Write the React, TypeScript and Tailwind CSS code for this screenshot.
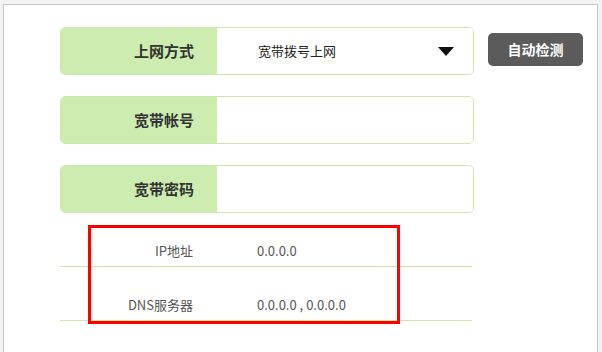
const font = { fontFamily: '"Noto Sans CJK SC", "Liberation Sans", sans-serif' };

interface FieldRowProps {
  label: string;
  value?: string;
  dropdown?: boolean;
}

function FieldRow({ label, value, dropdown }: FieldRowProps) {
  return (
    <div className="flex h-[48px] w-[414px] overflow-hidden rounded-[5px] border border-[#d1e5a9]">
      <div className="flex w-[156px] items-center justify-end bg-[#cdedb0] pr-[23px] text-[15px] font-bold text-[#333]">
        {label}
      </div>
      <div className="flex flex-1 items-center justify-between bg-white pl-[41px] pr-[19px] text-[13px] text-[#222]">
        <span>{value}</span>
        {dropdown && (
          <svg width="16" height="9" viewBox="0 0 16 9">
            <path d="M0 0 H16 L8 9 Z" fill="#111" />
          </svg>
        )}
      </div>
    </div>
  );
}

function InfoRow({ label, value }: { label: string; value: string }) {
  return (
    <div className="flex h-[54px] w-[412px] items-end border-b border-[#d0e5a8] pb-[6px] text-[13px] text-[#555]">
      <div className="w-[157px] pr-[24px] text-right">{label}</div>
      <div className="pl-[40px]">{value}</div>
    </div>
  );
}

export default function App() {
  return (
    <div className="h-[352px] w-[602px] overflow-hidden bg-[#f3f3f3] pl-[3px] pr-[4px] pt-[4px]" style={font}>
      <div className="relative h-full border-l border-r border-t border-[#c9c9c9] bg-white pl-[56px] pt-[22px]">
        <div className="flex flex-col gap-[21px]">
          <div className="flex items-start gap-[14px]">
            <FieldRow label="上网方式" value="宽带拨号上网" dropdown />
            <button
              type="button"
              className="mt-[6px] h-[33px] w-[95px] rounded-[5px] bg-[#5b5b5b] text-[14px] font-bold text-white"
            >
              自动检测
            </button>
          </div>
          <FieldRow label="宽带帐号" />
          <FieldRow label="宽带密码" />
        </div>
        <InfoRow label="IP地址" value="0.0.0.0" />
        <InfoRow label="DNS服务器" value="0.0.0.0 , 0.0.0.0" />
        <div className="absolute left-[84px] top-[220px] h-[99px] w-[312px] border-[3px] border-[#ff0000]" />
      </div>
    </div>
  );
}
